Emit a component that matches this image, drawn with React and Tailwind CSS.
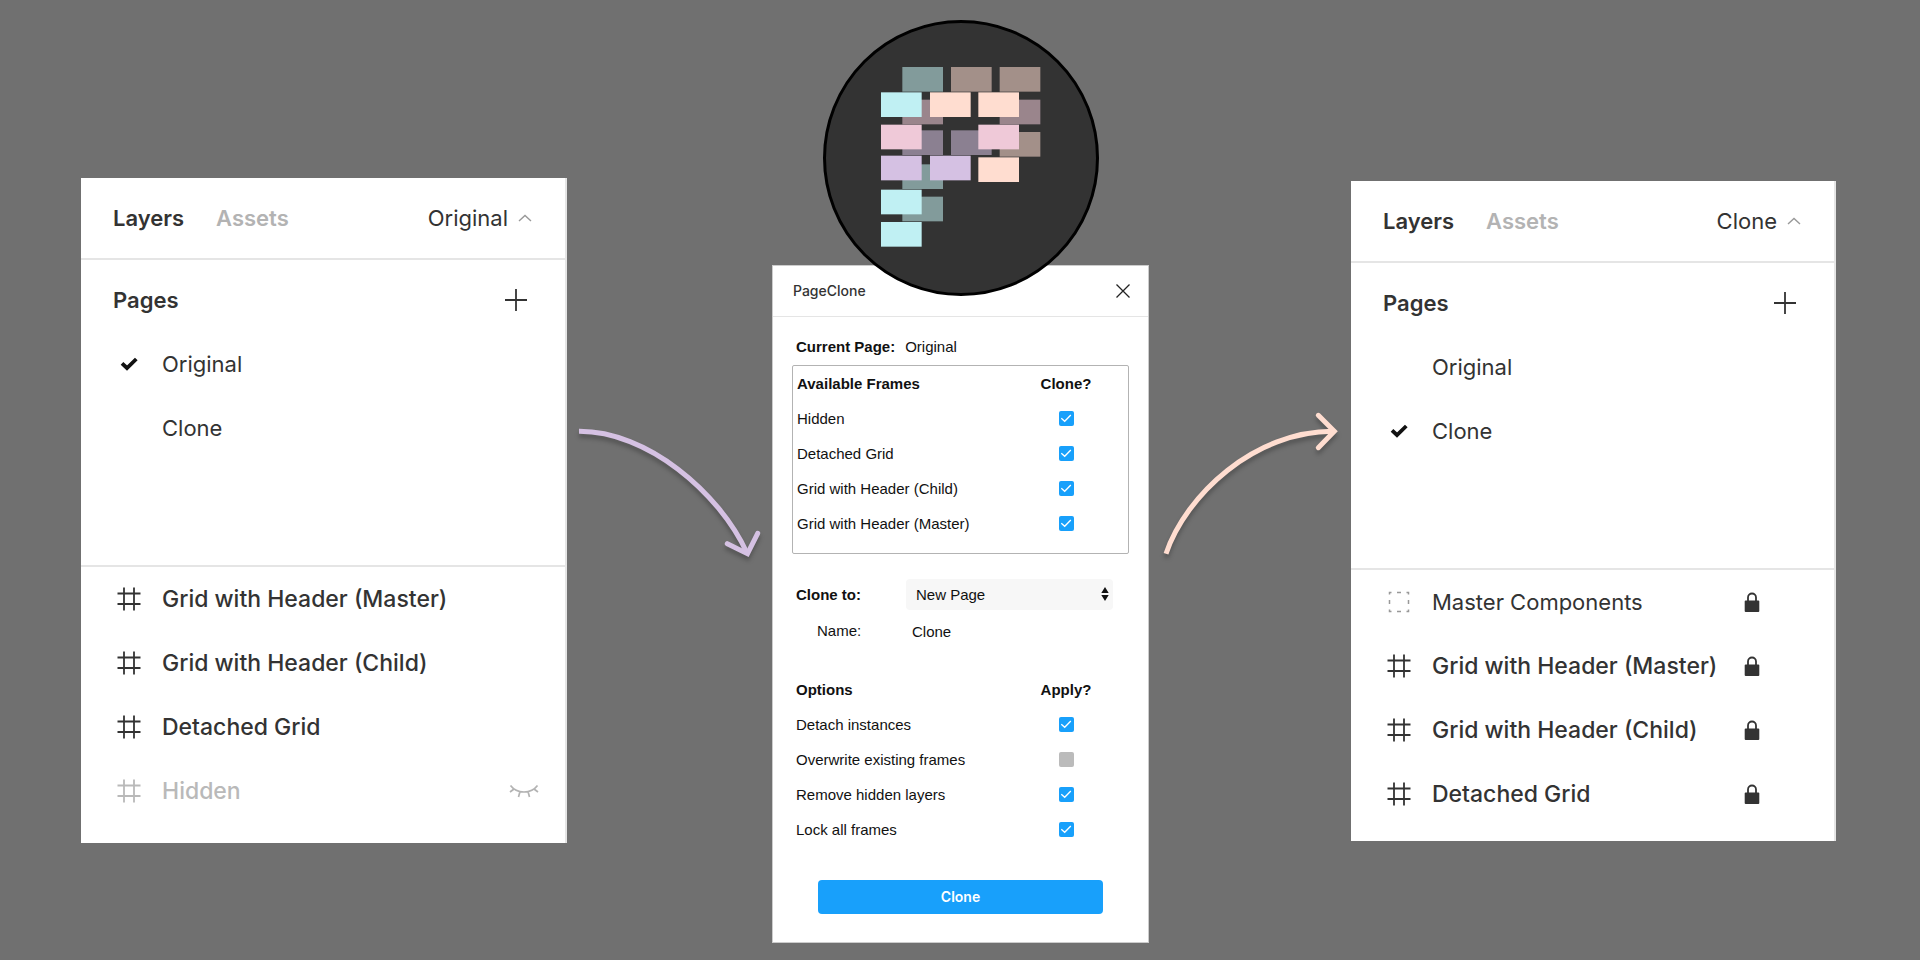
import React, { useState } from 'react'

const original = {
  current: 'Original',
  pages: ['Original', 'Clone'],
  layers: [
    { name: 'Grid with Header (Master)', type: 'frame' },
    { name: 'Grid with Header (Child)', type: 'frame' },
    { name: 'Detached Grid', type: 'frame' },
    { name: 'Hidden', type: 'frame', hidden: true },
  ],
}

const clone = {
  current: 'Clone',
  pages: ['Original', 'Clone'],
  layers: [
    { name: 'Master Components', type: 'group', locked: true },
    { name: 'Grid with Header (Master)', type: 'frame', locked: true },
    { name: 'Grid with Header (Child)', type: 'frame', locked: true },
    { name: 'Detached Grid', type: 'frame', locked: true },
  ],
}

const frames = [
  { id: 'hidden', label: 'Hidden', on: true },
  { id: 'detached', label: 'Detached Grid', on: true },
  { id: 'child', label: 'Grid with Header (Child)', on: true },
  { id: 'master', label: 'Grid with Header (Master)', on: true },
]

const options = [
  { id: 'detach', label: 'Detach instances', on: true },
  { id: 'overwrite', label: 'Overwrite existing frames', on: false },
  { id: 'remove', label: 'Remove hidden layers', on: true },
  { id: 'lock', label: 'Lock all frames', on: true },
]

// [x, y, fill], back tiles first
const tiles = [
  [277, 171, '#829b9b'], [423, 171, '#a39089'], [569, 171, '#a39089'],
  [277, 269, '#9a858c'], [569, 269, '#9a858c'],
  [277, 361, '#8b8091'], [423, 361, '#8b8091'], [569, 366, '#a39089'],
  [277, 463, '#829b9b'], [277, 560, '#829b9b'],
  [213, 247, '#c0f0f3'], [360, 247, '#ffddd0'], [505, 247, '#ffddd0'],
  [213, 344, '#efc9d8'], [505, 344, '#efc9d8'],
  [213, 437, '#d5c1e3'], [360, 437, '#d5c1e3'], [505, 442, '#ffddd0'],
  [213, 539, '#c0f0f3'], [213, 636, '#c0f0f3'],
]

// ===================== ICONS =====================
const FrameIcon = () => (
  <svg viewBox="0 0 24 24" className="w-6 h-6" fill="none" stroke="currentColor" strokeWidth="1.8">
    <path d="M7 .5v23M17 .5v23M.5 6.5h23M.5 17h23" />
  </svg>
)

const GroupIcon = () => (
  <svg viewBox="0 0 24 24" className="w-6 h-6 text-[#999]" fill="none" stroke="currentColor" strokeWidth="1.5">
    <path d="M2.5 4.5v-2h2M10 2.5h4M19.5 2.5h2v2M21.5 10v4M21.5 19.5v2h-2M14 21.5h-4M4.5 21.5h-2v-2M2.5 14v-4" />
  </svg>
)

const CheckIcon = () => (
  <svg viewBox="0 0 24 24" className="w-6 h-6" fill="none" stroke="#111" strokeWidth="3.8">
    <path d="M5 11.3l5 4.7 9.3-9" />
  </svg>
)

const LockIcon = () => (
  <svg viewBox="0 0 16 20" className="w-4 h-5">
    <path d="M4 9V5.5a4 4 0 0 1 8 0V9" fill="none" stroke="#333" strokeWidth="1.8" />
    <rect x=".7" y="8.5" width="14.6" height="11.5" rx="1" fill="#333" />
  </svg>
)

const EyeClosedIcon = () => (
  <svg viewBox="0 0 30 14" className="w-[30px] h-[14px]" fill="none" stroke="#b3b3b3" strokeWidth="1.7">
    <path d="M1.5 1.5c3 4 8 6.5 13.5 6.5s10.5-2.5 13.500-6.500M5 5l-4 3M25 5l4 3M11 7.5L9.5 13M19 7.5l1.5 5.5" />
  </svg>
)

const Logo = () => (
  <svg viewBox="39 30 828 828" className="w-[276px] h-[276px]">
    <circle cx="453" cy="444" r="409.5" fill="#333" stroke="#000" strokeWidth="9" />
    {tiles.map(([x, y, fill], i) => (
      <rect key={i} x={x} y={y} width="122" height="74" fill={fill} />
    ))}
  </svg>
)

// ===================== LAYERS PANEL =====================
const LayersPanel = ({ data, className }) => (
  <section className={`bg-white border-r-2 border-[#e5e5e5] font-[Inter,sans-serif] text-[22px] leading-8 text-[#333] ${className}`}>
    <header className="flex items-center h-[82px] pl-8 pr-[33px] border-b-2 border-[#e5e5e5]">
      <button className="font-semibold">Layers</button>
      <button className="ml-8 font-semibold text-[#b3b3b3]">Assets</button>
      <button className="flex items-center gap-2.5 ml-auto">
        {data.current}
        <svg viewBox="0 0 14 8" className="w-3.5 h-2" fill="none" stroke="#999" strokeWidth="1.4">
          <path d="M1 7l6-5.5L13 7" />
        </svg>
      </button>
    </header>
    <div className="pt-2 pb-[105px] border-b-2 border-[#e5e5e5]">
      <div className="flex items-center justify-between h-16 pl-8 pr-[38px]">
        <h2 className="font-semibold">Pages</h2>
        <button aria-label="Add page">
          <svg viewBox="0 0 22 22" className="w-[22px] h-[22px]" stroke="#333" strokeWidth="1.8">
            <path d="M11 0v22M0 11h22" />
          </svg>
        </button>
      </div>
      <ul>
        {data.pages.map(p => (
          <li key={p} className="flex items-center gap-[21px] h-16 pl-9">
            <span className="w-6 h-6">{p === data.current && <CheckIcon />}</span>
            {p}
          </li>
        ))}
      </ul>
    </div>
    <ul>
      {data.layers.map(l => (
        <li key={l.name} className={`flex items-center h-16 pl-9 pr-[26px] whitespace-nowrap ${l.hidden ? 'text-[#b9b9b9]' : ''}`}>
          {l.type === 'frame' ? <FrameIcon /> : <GroupIcon />}
          <span className={`ml-[21px] ${l.type === 'frame' ? 'text-[23px] font-medium' : ''}`}>{l.name}</span>
          <span className="flex items-center gap-[18px] ml-auto">
            {l.locked && <LockIcon />}
            <span className="w-[30px]">{l.hidden && <EyeClosedIcon />}</span>
          </span>
        </li>
      ))}
    </ul>
  </section>
)

// ===================== PLUGIN DIALOG =====================
const CheckTable = ({ title, action, rows }) => (
  <table className="w-full">
    <thead>
      <tr className="h-[35px]">
        <th className="p-0 text-left font-bold">{title}</th>
        <th className="p-0 w-[124px] font-bold">{action}</th>
      </tr>
    </thead>
    <tbody>
      {rows.map(r => (
        <tr key={r.id} className="h-[35px]">
          <td className="p-0"><label htmlFor={r.id}>{r.label}</label></td>
          <td className="p-0">
            <span className="grid justify-center">
              <input id={r.id} type="checkbox" defaultChecked={r.on} className="peer col-start-1 row-start-1 appearance-none w-[15px] h-[15px] rounded-xs bg-[#bbb] checked:bg-[#18a0fb]" />
              <svg viewBox="0 0 15 15" className="hidden peer-checked:block col-start-1 row-start-1 w-[15px] h-[15px] pointer-events-none" fill="none" stroke="#fff" strokeWidth="1.3">
                <path d="M2.3 7.3l3.4 3L11.8 4" />
              </svg>
            </span>
          </td>
        </tr>
      ))}
    </tbody>
  </table>
)

const PluginDialog = () => {
  const [name, setName] = useState('Clone')
  return (
    <div className="w-full -mt-[31px] bg-white border border-[#ccc] font-['Liberation_Sans',Arial,sans-serif] text-[15px] leading-5 text-[#111]">
      <header className="flex items-center justify-between h-[51px] pl-5 pr-[18px] border-b border-[#e5e5e5]">
        <h1 className="font-[Inter,sans-serif] text-sm font-medium text-[#333]">PageClone</h1>
        <button aria-label="Close">
          <svg viewBox="0 0 14 14" className="w-3.5 h-3.5" stroke="#222" strokeWidth="1.3">
            <path d="M.5.5l13 13M13.5.5l-13 13" />
          </svg>
        </button>
      </header>
      <form className="px-[19px] pt-5 pb-7" onSubmit={e => e.preventDefault()}>
        <p className="px-1"><b>Current Page:</b><span className="ml-2.5">Original</span></p>
        <div className="mt-2 pl-1 pb-3 border border-[#b3b3b3] rounded-xs">
          <CheckTable title="Available Frames" action="Clone?" rows={frames} />
        </div>
        <div className="grid grid-cols-[110px_1fr] items-center mt-[25px] pl-1 pr-4">
          <label htmlFor="target" className="font-bold">Clone to:</label>
          <span className="relative">
            <select id="target" className="block appearance-none w-full h-[31px] pl-2.5 rounded bg-[#f7f7f7]">
              <option>New Page</option>
            </select>
            <svg viewBox="0 0 8 14" className="absolute right-1 top-2 w-2 h-3.5 pointer-events-none" fill="#111">
              <path d="M4 0l3.7 6H.3zM4 14l3.7-6H.3z" />
            </svg>
          </span>
          <label htmlFor="name" className="pl-[21px]">Name:</label>
          <input id="name" value={name} onChange={e => setName(e.target.value)} className="h-[42px] pl-1.5" />
        </div>
        <div className="mt-5 pl-1 pr-px">
          <CheckTable title="Options" action="Apply?" rows={options} />
        </div>
        <button className="block w-[285px] h-[34px] mx-auto mt-[33px] rounded-sm bg-[#18a0fb] font-[Inter,sans-serif] text-sm font-semibold text-white">Clone</button>
      </form>
    </div>
  )
}

const App = () => (
  <main className="grid grid-cols-[486fr_205fr_377fr_202fr_485fr] items-start min-h-screen pl-[81px] pr-[84px] bg-[#707070]">
    <LayersPanel data={original} className="mt-[178px] pb-5" />
    <svg viewBox="0 0 205 180" className="w-full mt-[400px] drop-shadow-[0_4px_2px_rgba(0,0,0,0.25)]" fill="none" stroke="#d5c1e3" strokeWidth="5">
      <path d="M12 31.3C80 31 152 92 180 153" />
      <path d="M160.3 143.7l20.2 10 10.2-20.4" strokeLinecap="round" />
    </svg>
    <div className="flex flex-col items-center pt-5">
      <div className="relative z-10"><Logo /></div>
      <PluginDialog />
    </div>
    <svg viewBox="0 0 202 180" className="w-full mt-[400px] drop-shadow-[0_4px_2px_rgba(0,0,0,0.25)]" fill="none" stroke="#ffddd0" strokeWidth="5">
      <path d="M17 153.7C37 95 105 31.3 184 31.3" />
      <path d="M169.3 15.3l16 16-16 16.4" strokeLinecap="round" />
    </svg>
    <LayersPanel data={clone} className="mt-[181px] pb-[15px]" />
  </main>
)

export default App
